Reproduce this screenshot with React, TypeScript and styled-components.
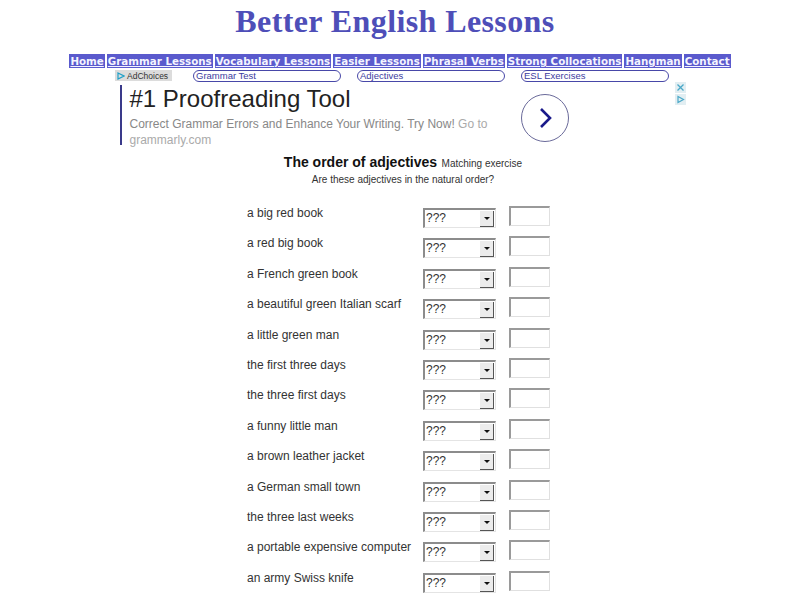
import styled, { createGlobalStyle } from "styled-components";

const GlobalStyle = createGlobalStyle`
  html, body {
    margin: 0;
    padding: 0;
    background: #ffffff;
  }
  body {
    font-family: "Liberation Sans", Arial, sans-serif;
  }
`;

const NAV_LINKS = [
  "Home",
  "Grammar Lessons",
  "Vocabulary Lessons",
  "Easier Lessons",
  "Phrasal Verbs",
  "Strong Collocations",
  "Hangman",
  "Contact",
];

const AD_LINKS = ["Grammar Test", "Adjectives", "ESL Exercises"];

const PHRASES = [
  "a big red book",
  "a red big book",
  "a French green book",
  "a beautiful green Italian scarf",
  "a little green man",
  "the first three days",
  "the three first days",
  "a funny little man",
  "a brown leather jacket",
  "a German small town",
  "the three last weeks",
  "a portable expensive computer",
  "an army Swiss knife",
];

const Page = styled.div`
  display: flex;
  flex-direction: column;
  align-items: center;
  width: 800px;
`;

const Title = styled.h1`
  margin: 4px 0 0 -10px;
  font-family: "Liberation Serif", "Times New Roman", serif;
  font-size: 32px;
  letter-spacing: 0.4px;
  font-weight: bold;
  color: #4e4eb8;
  line-height: 34px;
`;

const NavBar = styled.nav`
  display: flex;
  gap: 2px;
  margin-top: 16px;
`;

const NavLink = styled.a`
  background: #5a5acd;
  color: #f4f4ff;
  font-family: "DejaVu Sans", Verdana, sans-serif;
  font-size: 10.3px;
  font-weight: bold;
  line-height: 14px;
  padding: 0 1px;
  text-decoration: underline;
  cursor: pointer;
`;

const AdRow = styled.div`
  display: flex;
  align-items: center;
  width: 800px;
  height: 13px;
  margin-top: 1px;
  padding-left: 115px;
  box-sizing: border-box;
`;

const AdChoices = styled.div`
  display: flex;
  align-items: center;
  gap: 2px;
  width: 57px;
  height: 11px;
  background: #dcdcdc;
  font-size: 8.5px;
  color: #333;
  padding-left: 2px;
  box-sizing: border-box;
  margin-right: 21px;
`;

const AdPills = styled.div`
  display: flex;
  gap: 16px;
`;

const AdPill = styled.a`
  display: block;
  width: 148px;
  height: 12px;
  box-sizing: border-box;
  border: 1px solid #4848a8;
  border-radius: 7px;
  background: #ffffff;
  color: #3c3ca0;
  font-size: 9.5px;
  line-height: 10px;
  padding-left: 2px;
  cursor: pointer;
`;

const AdBox = styled.div`
  display: flex;
  width: 564px;
  margin-top: 1px;
  margin-left: 3px;
  height: 66px;
`;

const AdAccent = styled.div`
  width: 2px;
  height: 60px;
  margin-top: 2px;
  background: #3a3a8a;
  margin-right: 8px;
`;

const AdText = styled.div`
  width: 370px;
`;

const AdHeadline = styled.div`
  font-size: 24px;
  color: #222;
  line-height: 28px;
  margin-top: 2px;
  margin-bottom: 3px;
`;

const AdBody = styled.div`
  font-size: 12px;
  color: #888;
  line-height: 16px;
`;

const AdGoTo = styled.span`
  color: #aaa;
`;

const AdButtonCell = styled.div`
  display: flex;
  align-items: center;
  padding-left: 21px;
  padding-top: 4px;
`;

const CircleButton = styled.div`
  width: 46px;
  height: 46px;
  border: 1px solid #6a6a9a;
  border-radius: 50%;
  display: flex;
  align-items: center;
  justify-content: center;
`;

const AdCorner = styled.div`
  display: flex;
  flex-direction: column;
  gap: 1px;
  margin-left: auto;
  margin-top: -1px;
  margin-right: -2px;
`;

const CornerIcon = styled.div`
  width: 11px;
  height: 11px;
  background: #e2eef2;
  display: flex;
  align-items: center;
  justify-content: center;
`;

const Heading = styled.div`
  margin-top: 4px;
  text-align: center;
  line-height: 18px;
  margin-left: 6px;
`;

const HeadingMain = styled.span`
  font-size: 14px;
  font-weight: bold;
  color: #111;
`;

const HeadingSub = styled.span`
  font-size: 10px;
  color: #333;
`;

const Question = styled.div`
  font-size: 10px;
  color: #333;
  line-height: 14px;
`;

const Table = styled.div`
  display: grid;
  grid-template-columns: 176px 86px 41px;
  grid-auto-rows: 30.4px;
  margin-top: 18px;
  margin-left: -3px;
`;

const Phrase = styled.div`
  font-size: 12px;
  color: #333;
  line-height: 14px;
  margin-top: 1px;
`;

const Dropdown = styled.div`
  display: flex;
  width: 73px;
  height: 20px;
  margin-top: 3px;
  box-sizing: border-box;
  border-top: 2px solid #8c8c8c;
  border-left: 2px solid #8c8c8c;
  border-right: 1px solid #e4e4e4;
  border-bottom: 1px solid #e4e4e4;
  background: #fff;
`;

const DropdownValue = styled.span`
  flex: 1;
  font-size: 12px;
  color: #333;
  line-height: 16px;
  padding-left: 1px;
`;

const DropdownArrow = styled.span`
  width: 13px;
  margin: 1px 1px 0 0;
  background: #ececec;
  border-right: 1px solid #555;
  border-bottom: 1px solid #555;
  display: flex;
  align-items: center;
  justify-content: center;
  &::after {
    content: "";
    border-left: 3px solid transparent;
    border-right: 3px solid transparent;
    border-top: 3px solid #111;
  }
`;

const AnswerBox = styled.div`
  width: 41px;
  height: 20px;
  margin-top: 1px;
  box-sizing: border-box;
  border-top: 2px solid #9a9a9a;
  border-left: 2px solid #9a9a9a;
  border-right: 1px solid #e0e0e0;
  border-bottom: 1px solid #e0e0e0;
  background: #fff;
`;

export default function App() {
  return (
    <>
      <GlobalStyle />
      <Page>
        <Title>Better English Lessons</Title>
        <NavBar>
          {NAV_LINKS.map((l) => (
            <NavLink key={l}>{l}</NavLink>
          ))}
        </NavBar>
        <AdRow>
          <AdChoices>
            <svg width="8" height="8" viewBox="0 0 8 8">
              <path d="M1 1 L7 4 L1 7 Z" fill="none" stroke="#1ea0c8" strokeWidth="1.2" />
            </svg>
            AdChoices
          </AdChoices>
          <AdPills>
            {AD_LINKS.map((l) => (
              <AdPill key={l}>{l}</AdPill>
            ))}
          </AdPills>
        </AdRow>
        <AdBox>
          <AdAccent />
          <AdText>
            <AdHeadline>#1 Proofreading Tool</AdHeadline>
            <AdBody>
              Correct Grammar Errors and Enhance Your Writing. Try Now!{" "}
              <AdGoTo>Go to grammarly.com</AdGoTo>
            </AdBody>
          </AdText>
          <AdButtonCell>
            <CircleButton>
              <svg width="20" height="24" viewBox="0 0 20 24">
                <path d="M6 3 L15 12 L6 21" fill="none" stroke="#1a1a8a" strokeWidth="2.6" />
              </svg>
            </CircleButton>
          </AdButtonCell>
          <AdCorner>
            <CornerIcon>
              <svg width="9" height="9" viewBox="0 0 9 9">
                <path d="M1.5 1.5 L7.5 7.5 M7.5 1.5 L1.5 7.5" stroke="#4aa8c8" strokeWidth="1.3" />
              </svg>
            </CornerIcon>
            <CornerIcon>
              <svg width="9" height="9" viewBox="0 0 9 9">
                <path d="M2 1.5 L7.5 4.5 L2 7.5 Z" fill="none" stroke="#4aa8c8" strokeWidth="1.2" />
              </svg>
            </CornerIcon>
          </AdCorner>
        </AdBox>
        <Heading>
          <HeadingMain>The order of adjectives</HeadingMain>{" "}
          <HeadingSub>Matching exercise</HeadingSub>
          <Question>Are these adjectives in the natural order?</Question>
        </Heading>
        <Table>
          {PHRASES.map((p) => (
            <>
              <Phrase key={p}>{p}</Phrase>
              <div>
                <Dropdown>
                  <DropdownValue>???</DropdownValue>
                  <DropdownArrow />
                </Dropdown>
              </div>
              <AnswerBox />
            </>
          ))}
        </Table>
      </Page>
    </>
  );
}
